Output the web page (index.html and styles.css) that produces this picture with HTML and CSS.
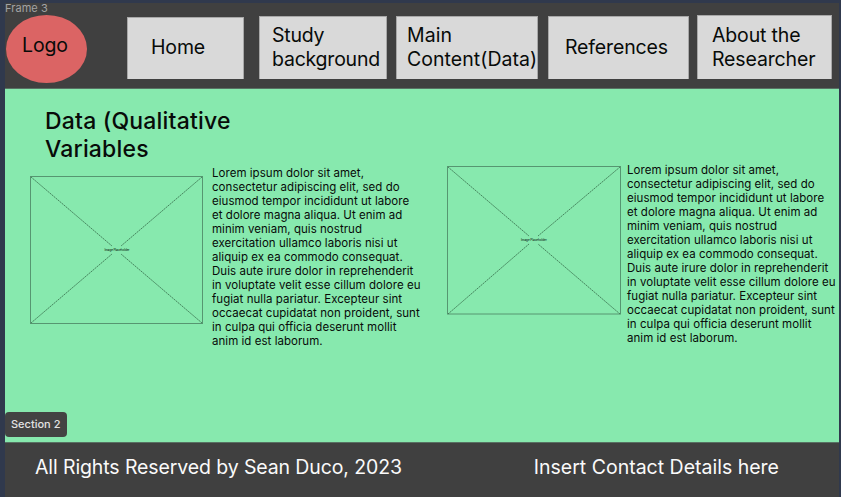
FILE: index.html
```html
<!DOCTYPE html>
<html lang="en">
<head>
<meta charset="utf-8">
<title>Data (Qualitative Variables)</title>
<link rel="stylesheet" href="styles.css">
</head>
<body>
<div class="frame">
  <span class="frame-label">Frame 3</span>
  <header class="header">
    <div class="logo"><span>Logo</span></div>
    <nav class="nav">
      <a class="tab home"><span>Home</span></a>
      <a class="tab study"><span>Study<br>background</span></a>
      <a class="tab main"><span>Main<br>Content(Data)</span></a>
      <a class="tab refs"><span>References</span></a>
      <a class="tab about"><span>About the<br>Researcher</span></a>
    </nav>
  </header>
  <main class="content">
    <section class="column first">
      <h1 class="title">Data (Qualitative<br>Variables</h1>
      <div class="entry">
        <svg class="placeholder" width="174" height="148" viewBox="0 0 174 148">
          <rect x=".5" y=".5" width="172" height="147"/>
          <path d="M1 1L82 70M172 1L91 70M1 147L82 78M172 147L91 78"/>
          <text x="87" y="75" textLength="25">Image Placeholder</text>
        </svg>
        <p class="copy">Lorem ipsum dolor sit amet,<br>consectetur adipiscing elit, sed do<br>eiusmod tempor incididunt ut labore<br>et dolore magna aliqua. Ut enim ad<br>minim veniam, quis nostrud<br>exercitation ullamco laboris nisi ut<br>aliquip ex ea commodo consequat.<br>Duis aute irure dolor in reprehenderit<br>in voluptate velit esse cillum dolore eu<br>fugiat nulla pariatur. Excepteur sint<br>occaecat cupidatat non proident, sunt<br>in culpa qui officia deserunt mollit<br>anim id est laborum.</p>
      </div>
    </section>
    <section class="column second">
      <div class="entry">
        <svg class="placeholder" width="174" height="149" viewBox="0 0 174 149">
          <rect x=".5" y=".5" width="173" height="147.5"/>
          <path d="M1 1L82 70M173 1L91 70M1 148L82 78M173 148L91 78"/>
          <text x="87" y="75" textLength="26">Image Placeholder</text>
        </svg>
        <p class="copy">Lorem ipsum dolor sit amet,<br>consectetur adipiscing elit, sed do<br>eiusmod tempor incididunt ut labore<br>et dolore magna aliqua. Ut enim ad<br>minim veniam, quis nostrud<br>exercitation ullamco laboris nisi ut<br>aliquip ex ea commodo consequat.<br>Duis aute irure dolor in reprehenderit<br>in voluptate velit esse cillum dolore eu<br>fugiat nulla pariatur. Excepteur sint<br>occaecat cupidatat non proident, sunt<br>in culpa qui officia deserunt mollit<br>anim id est laborum.</p>
      </div>
    </section>
    <span class="section-label">Section 2</span>
  </main>
  <footer class="footer">
    <span class="rights">All Rights Reserved by Sean Duco, 2023</span>
    <span>Insert Contact Details here</span>
  </footer>
</div>
</body>
</html>
```
FILE: styles.css
```css
* { box-sizing: border-box; }
body {
  margin: 0;
  height: 497px;
  overflow: hidden;
  padding: 3px 2px 0 5px;
  background: #30394d;
  color: #080b09;
  font-family: Inter, sans-serif;
}
.frame {
  position: relative;
  height: 494px;
  display: flex;
  flex-direction: column;
  white-space: nowrap;
}
.frame-label {
  position: absolute;
  left: 0;
  top: -2px;
  font-size: 11px;
  line-height: 14px;
  letter-spacing: .05px;
  color: #a3a3a3;
}
.header {
  height: 86px;
  flex: none;
  display: flex;
  align-items: flex-start;
  padding: 12px 0 0 1px;
  background: #404040;
  border-bottom: 1px solid #587163;
}
.logo {
  flex: none;
  width: 81px;
  height: 68px;
  margin-right: 40px;
  padding: 18px 0 0 16px;
  border-radius: 50%;
  background: #db6464;
  font-size: 19.5px;
  line-height: 24px;
  letter-spacing: -.15px;
}
.nav {
  flex: none;
  display: flex;
  align-items: flex-end;
  height: 64px;
}
.tab {
  display: flex;
  flex: none;
  align-items: flex-start;
  height: 63px;
  padding-top: 7px;
  background: #d9d9d9;
  border: 1px solid #a8a8a8;
  border-width: 1px 1px 0;
  font-size: 19.5px;
  line-height: 23.5px;
  letter-spacing: -.15px;
}
.home { width: 117px; height: 62px; margin-right: 15px; padding: 18px 0 0 23px; }
.study { width: 128px; margin-right: 9px; padding-left: 12px; letter-spacing: -.22px; }
.main { width: 142px; margin-right: 10px; padding-left: 10px; letter-spacing: .05px; }
.refs { width: 141px; margin-right: 8px; padding: 19px 0 0 16px; }
.about { width: 135px; height: 64px; padding: 8px 0 0 14px; }
.content {
  position: relative;
  height: 353px;
  flex: none;
  display: flex;
  background: #87e9ae;
}
.column { flex: none; }
.first { width: 442px; padding: 18px 0 0 25px; }
.second { padding-top: 74px; }
.title {
  margin: 0 0 3px 15px;
  font-size: 23px;
  line-height: 28px;
  font-weight: 500;
  letter-spacing: .19px;
}
.entry { display: flex; align-items: flex-start; }
.first .placeholder { margin-top: 10px; }
.second .placeholder { margin-top: 3px; }
.placeholder {
  flex: none;
  fill: none;
  stroke: #569671;
  stroke-width: 1;
}
.placeholder path {
  stroke: #356b49;
  stroke-width: .8;
  stroke-dasharray: 2 .7;
}
.placeholder text {
  fill: #10291a;
  stroke: none;
  font-size: 3px;
  font-weight: 500;
  text-anchor: middle;
}
.copy {
  margin: 0 0 0 8px;
  font-size: 11.5px;
  line-height: 14px;
  letter-spacing: .04px;
}
.second .copy { margin-left: 6px; }
.section-label {
  position: absolute;
  left: 0;
  bottom: 5px;
  width: 62px;
  height: 25px;
  padding-left: 6px;
  border-radius: 4px;
  background: #434343;
  color: #e2e2e2;
  font-size: 11px;
  font-weight: 500;
  line-height: 25px;
}
.footer {
  flex: 1;
  display: flex;
  justify-content: space-between;
  align-items: flex-start;
  padding: 12px 60px 0 30px;
  background: #404040;
  border-top: 1px solid #587163;
  color: #fafafa;
  font-size: 19.5px;
  line-height: 24px;
}
.rights { letter-spacing: -.11px; }
```
